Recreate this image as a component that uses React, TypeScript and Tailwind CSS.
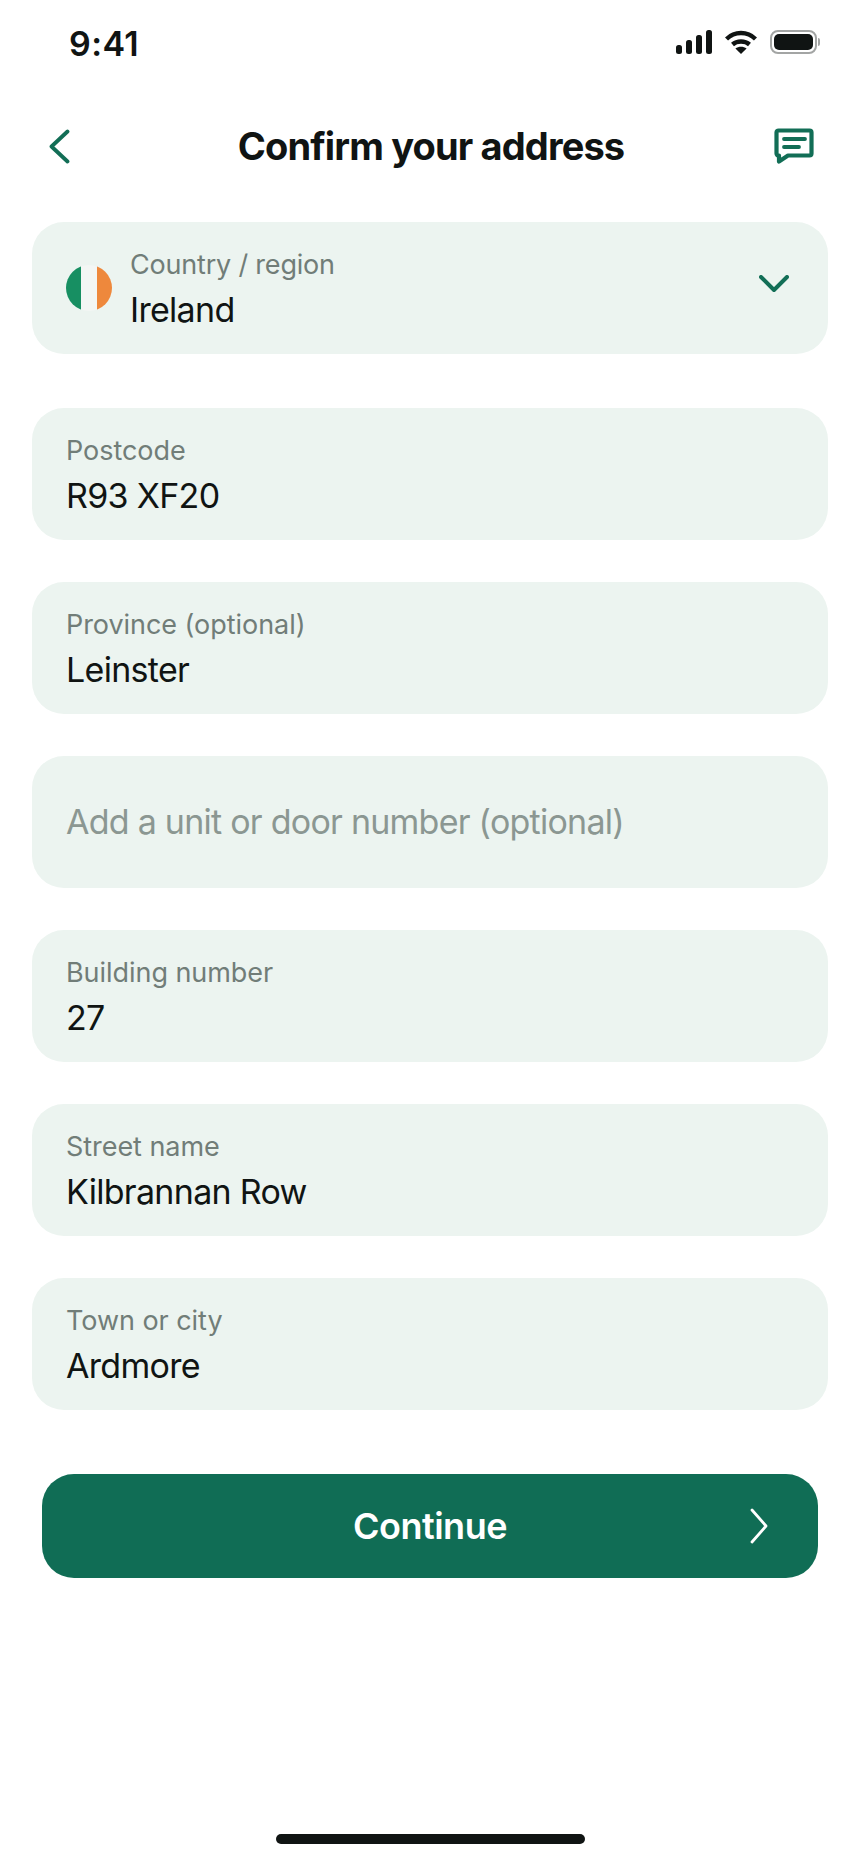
const fields = [
  { label: "Postcode", value: "R93 XF20" },
  { label: "Province (optional)", value: "Leinster" },
  { placeholder: "Add a unit or door number (optional)" },
  { label: "Building number", value: "27" },
  { label: "Street name", value: "Kilbrannan Row" },
  { label: "Town or city", value: "Ardmore" },
];

function StatusBar() {
  return (
    <div className="flex h-[88px] items-center justify-between pl-[69px] pr-[40px]">
      <span className="text-[34px] font-semibold leading-none tracking-[0.4px] text-[#101413]">9:41</span>
      <div className="flex items-center gap-[13px] pb-[5px]">
        <svg width="36" height="24" viewBox="0 0 36 24" fill="#101413">
          <rect x="0" y="15" width="6" height="9" rx="2.5" />
          <rect x="10" y="10" width="6" height="14" rx="2.5" />
          <rect x="20" y="5" width="6" height="19" rx="2.5" />
          <rect x="30" y="0" width="6" height="24" rx="2.5" />
        </svg>
        <svg width="32" height="24" viewBox="0 0 32 24" fill="none" stroke="#101413" strokeWidth="4.4">
          <path d="M1.5 9C9.5 1 22.5 1 30.5 9" />
          <path d="M7.5 14.5C12 10.5 20 10.5 24.5 14.5" />
          <path d="M16 24l-5.6-5.6c3.2-2.2 8-2.2 11.2 0z" fill="#101413" stroke="none" />
        </svg>
        <div className="flex items-center">
          <div className="flex h-[24px] w-[47px] items-center justify-center rounded-[8px] border-2 border-[#a3a5a4]">
            <div className="h-[16px] w-[39px] rounded-[5px] bg-[#101413]" />
          </div>
          <div className="ml-[1px] h-[8px] w-[2px] rounded-r-full bg-[#a3a5a4]" />
        </div>
      </div>
    </div>
  );
}

function Flag() {
  return (
    <div className="flex h-[46px] w-[46px] shrink-0 overflow-hidden rounded-full">
      <div className="flex-1 bg-[#178f62]" />
      <div className="flex-1 bg-[#f3f6f4]" />
      <div className="flex-1 bg-[#ee883c]" />
    </div>
  );
}

function Field({ label, value, placeholder }: { label?: string; value?: string; placeholder?: string }) {
  return (
    <div className="flex h-[132px] flex-col justify-center rounded-[32px] bg-[#ecf4f0] px-[34px]">
      {placeholder ? (
        <span className="text-[34px] leading-[50px] tracking-[-0.75px] text-[#8b9792]">{placeholder}</span>
      ) : (
        <div className="pt-[4px]">
          <div className="text-[27px] leading-[40px] tracking-[-0.05px] text-[#717d78]">{label}</div>
          <div className="text-[34px] leading-[50px] tracking-[-0.7px] text-[#101413]">{value}</div>
        </div>
      )}
    </div>
  );
}

export default function App() {
  return (
    <div className="flex h-[1864px] w-[860px] flex-col bg-white font-['Inter',sans-serif]">
      <StatusBar />

      {/* header */}
      <div className="mt-[22px] grid h-[72px] grid-cols-[1fr_auto_1fr] items-center pl-[48px] pr-[46px]">
        <svg width="21" height="35" viewBox="0 0 21 35" fill="none" stroke="#126e56" strokeWidth="3.8" strokeLinecap="round" strokeLinejoin="round" className="ml-[1px]">
          <path d="M18.5 2.5L2.5 17.5l16 15" />
        </svg>
        <h1 className="text-[38px] font-bold leading-none tracking-[-0.85px] text-[#101413]">Confirm your address</h1>
        <svg width="40" height="37" viewBox="0 0 40 37" fill="none" stroke="#126e56" strokeWidth="4.2" strokeLinejoin="round" className="justify-self-end">
          <path d="M4.5 2.5h31a2 2 0 0 1 2 2v21a2 2 0 0 1-2 2H14L5 33.5v-6h-.5a2 2 0 0 1-2-2v-21a2 2 0 0 1 2-2z" />
          <path d="M10 11h21M10 19h15" strokeWidth="3.8" strokeLinecap="round" />
        </svg>
      </div>

      <div className="flex flex-col px-[32px] pt-[40px]">
        <div className="mb-[54px] flex h-[132px] items-center rounded-[32px] bg-[#ecf4f0] pl-[34px] pr-[39px]">
          <Flag />
          <div className="ml-[18px] flex flex-1 flex-col pt-[4px]">
            <span className="text-[27px] leading-[40px] tracking-[-0.2px] text-[#717d78]">Country / region</span>
            <span className="text-[34px] leading-[50px] tracking-[-0.7px] text-[#101413]">Ireland</span>
          </div>
          <svg width="30" height="18" viewBox="0 0 30 18" fill="none" stroke="#126e56" strokeWidth="4" strokeLinecap="round" strokeLinejoin="round" className="mb-[8px]">
            <path d="M2 2l13 13L28 2" />
          </svg>
        </div>

        <div className="flex flex-col gap-[42px]">
          {fields.map((f, i) => (
            <Field key={i} {...f} />
          ))}
        </div>

        <div className="px-[10px] pt-[64px]">
          <button className="flex h-[104px] w-full items-center justify-between rounded-[32px] bg-[#106d55] pl-[50px] pr-[50px]">
            <span className="w-[18px]" />
            <span className="text-[36px] font-semibold tracking-[-0.5px] text-white">Continue</span>
            <svg width="18" height="36" viewBox="0 0 18 36" fill="none" stroke="#fff" strokeWidth="2.8" strokeLinecap="round" strokeLinejoin="round">
              <path d="M2 2l14 16L2 34" />
            </svg>
          </button>
        </div>
      </div>

      <div className="mt-auto flex justify-center pb-[20px]">
        <div className="h-[10px] w-[309px] rounded-full bg-[#101413]" />
      </div>
    </div>
  );
}
